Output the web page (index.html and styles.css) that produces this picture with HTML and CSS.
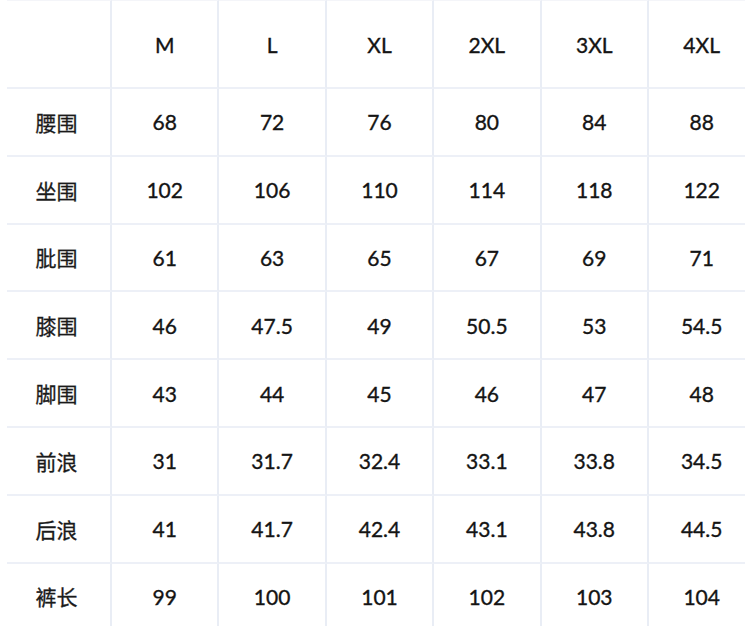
FILE: index.html
```html
<!DOCTYPE html>
<html lang="zh">
<head>
<meta charset="utf-8">
<link rel="stylesheet" href="styles.css">
</head>
<body>
<div class="size-table">
  <div class="cell head label"></div>
  <div class="cell head">M</div>
  <div class="cell head">L</div>
  <div class="cell head">XL</div>
  <div class="cell head">2XL</div>
  <div class="cell head">3XL</div>
  <div class="cell head">4XL</div>

  <div class="cell label">腰围</div>
  <div class="cell">68</div><div class="cell">72</div><div class="cell">76</div><div class="cell">80</div><div class="cell">84</div><div class="cell">88</div>

  <div class="cell label">坐围</div>
  <div class="cell">102</div><div class="cell">106</div><div class="cell">110</div><div class="cell">114</div><div class="cell">118</div><div class="cell">122</div>

  <div class="cell label">肶围</div>
  <div class="cell">61</div><div class="cell">63</div><div class="cell">65</div><div class="cell">67</div><div class="cell">69</div><div class="cell">71</div>

  <div class="cell label">膝围</div>
  <div class="cell">46</div><div class="cell">47.5</div><div class="cell">49</div><div class="cell">50.5</div><div class="cell">53</div><div class="cell">54.5</div>

  <div class="cell label">脚围</div>
  <div class="cell">43</div><div class="cell">44</div><div class="cell">45</div><div class="cell">46</div><div class="cell">47</div><div class="cell">48</div>

  <div class="cell label">前浪</div>
  <div class="cell">31</div><div class="cell">31.7</div><div class="cell">32.4</div><div class="cell">33.1</div><div class="cell">33.8</div><div class="cell">34.5</div>

  <div class="cell label">后浪</div>
  <div class="cell">41</div><div class="cell">41.7</div><div class="cell">42.4</div><div class="cell">43.1</div><div class="cell">43.8</div><div class="cell">44.5</div>

  <div class="cell label">裤长</div>
  <div class="cell">99</div><div class="cell">100</div><div class="cell">101</div><div class="cell">102</div><div class="cell">103</div><div class="cell">104</div>
</div>
</body>
</html>
```

FILE: styles.css
```css
html, body {
  margin: 0;
  padding: 0;
  background: #ffffff;
  overflow: hidden;
}

.size-table {
  display: grid;
  grid-template-columns: 105px repeat(6, 107.4px);
  grid-template-rows: 89px repeat(8, 67.8px);
  margin-left: 7px;
  width: max-content;
  font-family: "Lato", "Noto Sans CJK SC", sans-serif;
  font-size: 21px;
  color: #141414;
  -webkit-text-stroke: 0.35px #141414;
}

.cell {
  display: flex;
  align-items: center;
  justify-content: center;
  box-sizing: border-box;
  border-right: 2px solid #e9edf5;
  border-bottom: 2px solid #edf0f7;
}

.head {
  border-top: 1px solid #f4f5f9;
}

.label {
  font-family: "Noto Sans CJK SC", sans-serif;
  font-weight: 400;
  font-size: 21px;
  padding-right: 4px;
  color: #1a1a1a;
  -webkit-text-stroke: 0.3px #1a1a1a;
}
```
